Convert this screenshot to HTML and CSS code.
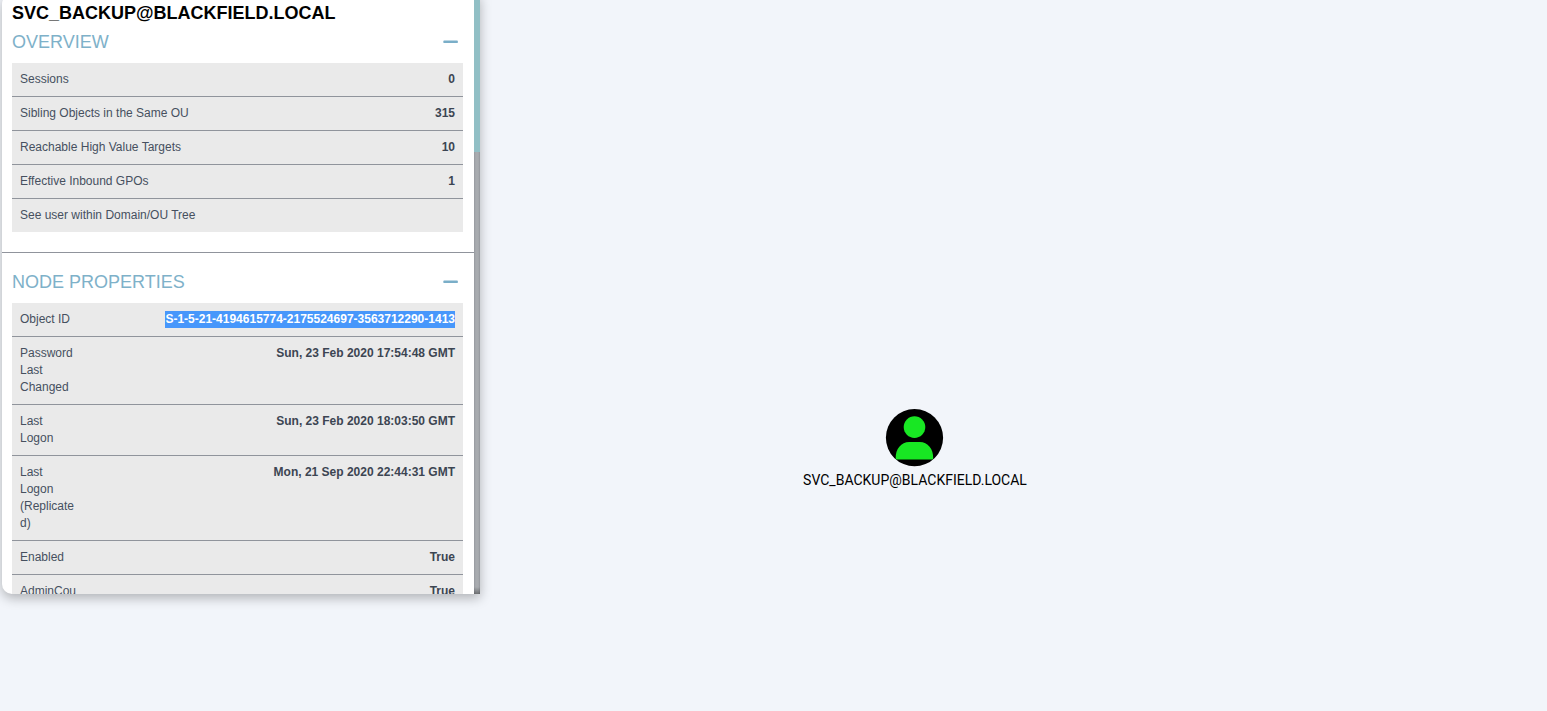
FILE: index.html
```
<!DOCTYPE html>
<html lang="en">
<head>
<meta charset="utf-8">
<title>Node Info</title>
<link rel="stylesheet" href="styles.css">
</head>
<body>
<main class="graph">
  <aside class="panel">
    <div class="content">
      <h1 class="title">SVC_BACKUP@BLACKFIELD.LOCAL</h1>
      <section class="section">
        <header class="section-head"><h2>OVERVIEW</h2><svg class="minus" width="15" height="4" viewBox="0 0 15 4"><rect x="0.4" y="0.6" width="14.4" height="2.4" rx="0.6"/></svg></header>
        <dl class="table">
          <div class="row"><dt>Sessions</dt><dd>0</dd></div>
          <div class="row"><dt>Sibling Objects in the Same OU</dt><dd>315</dd></div>
          <div class="row"><dt>Reachable High Value Targets</dt><dd>10</dd></div>
          <div class="row"><dt>Effective Inbound GPOs</dt><dd>1</dd></div>
          <div class="row"><dt>See user within Domain/OU Tree</dt><dd></dd></div>
        </dl>
      </section>
      <hr class="rule">
      <section class="section">
        <header class="section-head"><h2>NODE PROPERTIES</h2><svg class="minus" width="15" height="4" viewBox="0 0 15 4"><rect x="0.4" y="0.6" width="14.4" height="2.4" rx="0.6"/></svg></header>
        <dl class="table props">
          <div class="row"><dt>Object ID</dt><dd><span class="selected">S-1-5-21-4194615774-2175524697-3563712290-1413</span></dd></div>
          <div class="row"><dt>Password Last Changed</dt><dd>Sun, 23 Feb 2020 17:54:48 GMT</dd></div>
          <div class="row"><dt>Last Logon</dt><dd>Sun, 23 Feb 2020 18:03:50 GMT</dd></div>
          <div class="row"><dt>Last Logon (Replicated)</dt><dd>Mon, 21 Sep 2020 22:44:31 GMT</dd></div>
          <div class="row"><dt>Enabled</dt><dd>True</dd></div>
          <div class="row"><dt>AdminCount</dt><dd>True</dd></div>
        </dl>
      </section>
    </div>
    <div class="scrollbar"><div class="thumb"></div></div>
  </aside>
  <figure class="node">
    <svg width="58" height="58" viewBox="0 0 58 58">
      <circle cx="28.5" cy="28.7" r="28.6"/>
      <g fill="#18e723">
        <circle cx="28.5" cy="18.1" r="10.8"/>
        <path d="M9.7 49.2C9.4 40 15.2 32.9 23.2 32.9h10.6C41.8 32.9 47.5 40 47.2 49.2q0 1.3-1.4 1.3H11.1q-1.4 0-1.4-1.3z"/>
      </g>
    </svg>
    <figcaption>SVC_BACKUP@BLACKFIELD.LOCAL</figcaption>
  </figure>
</main>
</body>
</html>
```
FILE: styles.css
```
* { box-sizing: border-box; }
body {
  margin: 0;
  background: #f2f5fa;
  color: #000;
  font-family: "Liberation Sans", Arial, sans-serif;
}
.graph {
  position: relative;
  height: 711px;
  overflow: hidden;
}
.panel {
  display: flex;
  width: 478px;
  height: 600px;
  margin: -6px 0 0 2px;
  background: #fff;
  border-radius: 10px 0 0 10px;
  box-shadow: 0 4px 12px rgba(0, 0, 0, 0.28);
  overflow: hidden;
}
.content { width: 472px; overflow: hidden; }
.title {
  margin: 0;
  padding: 8px 10px 0;
  font-size: 18px;
  line-height: 22px;
  font-weight: 700;
}
.section { padding: 0 11px 0 10px; }
.section-head {
  display: flex;
  align-items: center;
  justify-content: space-between;
  height: 36px;
  margin-bottom: 3px;
  padding-right: 5px;
}
.section-head h2 {
  margin: 0;
  color: #7eb1c9;
  font-size: 18px;
  line-height: 22px;
  font-weight: 400;
}
.minus { fill: #7aaec8; }
.table {
  margin: 0;
  background: #eaeaea;
  color: #46505f;
  font-size: 12px;
  line-height: 17px;
}
.row {
  display: flex;
  justify-content: space-between;
  padding: 8px;
}
.row + .row { border-top: 1px solid #90949c; }
.props dt { width: 57px; overflow-wrap: break-word; word-break: break-word; }
.row dd { margin: 0; font-weight: 700; white-space: nowrap; color: #3c4552; }
.selected {
  display: inline-block;
  background: #4797fb;
  color: #fff;
}
.rule {
  height: 1px;
  margin: 20px 0 11px;
  border: 0;
  background: #90949c;
}
.scrollbar {
  width: 6px;
  background:
    linear-gradient(to top, rgba(0, 0, 0, 0.35), transparent 7px),
    linear-gradient(to right, #96999f, #a8abaf 30%, #a8abaf 70%, #93969c);
}
.thumb { height: 158px; background: #91bfc5; }
.node {
  position: absolute;
  left: 802px;
  top: 409px;
  width: 226px;
  margin: 0;
  display: flex;
  flex-direction: column;
  align-items: center;
}
.node svg { overflow: visible; }
.node figcaption {
  margin-top: 3px;
  font: 14px/20px Roboto, sans-serif;
  white-space: nowrap;
}
```
